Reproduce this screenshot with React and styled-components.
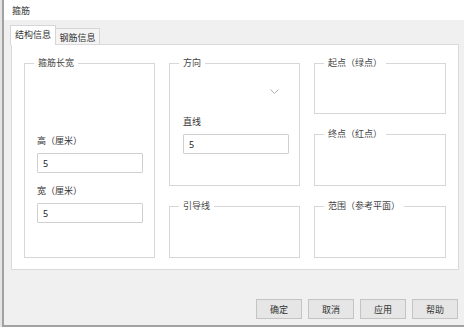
import React from 'react';
import styled, { createGlobalStyle } from 'styled-components';

const Global = createGlobalStyle`
  html, body { margin: 0; padding: 0; }
  body {
    width: 464px; height: 327px; overflow: hidden; background: #f0f0f0;
    font-family: "Noto Sans CJK SC", "Noto Sans", sans-serif;
  }
`;

const Window = styled.div`
  width: 464px; height: 327px; box-sizing: border-box;
  padding-left: 2px; background: #e4e4e4; display: flex;
`;

const Frame = styled.div`
  flex: 1; display: flex; flex-direction: column;
  border-left: 2px solid #a2a2a2; border-bottom: 2px solid #a2a2a2;
  background: #f0f0f0;
`;

const TitleBar = styled.div`
  height: 20px; flex: none; background: #fff; display: flex; align-items: center;
  padding-left: 8px; font-size: 9px; color: #333;
`;

const Body = styled.div`
  flex: 1; display: flex; flex-direction: column;
  padding: 5px 6px 0 7px;
`;

const TabStrip = styled.div`
  display: flex; align-items: flex-end; height: 19px; position: relative; z-index: 1;
`;

const Tab = styled.div`
  box-sizing: border-box; display: flex; align-items: center; justify-content: center;
  font-size: 9px; color: #333;
  border: 1px solid #d6d6d6;
  ${p => p.$active ? `
    height: 20px; width: 46px; margin-left: -1px; margin-bottom: -1px;
    background: #fff; border-bottom: none; padding-bottom: 2px;
  ` : `
    height: 16px; width: 45px; margin-left: -1px;
    background: #f4f4f4; border-bottom: none; padding-top: 1px;
  `}
`;

const Panel = styled.div`
  box-sizing: border-box; width: 448px; height: 226px;
  background: #fff; border: 1px solid #dadada;
  padding: 18px 12px 0 12px;
`;

const Grid = styled.div`
  display: grid;
  grid-template-columns: 131px 131px 132px;
  grid-template-rows: 51px 52px 52px;
  column-gap: 14px; row-gap: 20px;
  grid-template-areas:
    "size dir start"
    "size dir end"
    "size guide range";
`;

const Group = styled.div`
  grid-area: ${p => p.$area};
  position: relative; box-sizing: border-box;
  border: 1px solid #d7d7d7;
  display: flex; flex-direction: column;
`;

const Legend = styled.span`
  position: absolute; top: -7px; left: 9px;
  padding: 0 4px; background: #fff;
  font-size: 9px; line-height: 12px; color: #444;
`;

const SizeContent = styled.div`
  flex: 1; display: flex; flex-direction: column; justify-content: flex-end;
  padding: 0 12px 34px 12px;
  gap: 12px;
`;

const DirContent = styled.div`
  display: flex; flex-direction: column;
  padding: 17px 12px 0 13px;
`;

const Field = styled.div`
  display: flex; flex-direction: column;
`;

const Label = styled.div`
  font-size: 9px; line-height: 12px; color: #333;
  margin-bottom: ${p => p.$gap || 6}px;
  margin-top: ${p => p.$top || 0}px;
`;

const Input = styled.div`
  box-sizing: border-box; width: 106px; height: 20px;
  border: 1px solid #d0d0d0; border-radius: 1px;
  display: flex; align-items: center; padding-left: 5px;
  font-family: "Noto Sans", sans-serif; font-size: 9px; color: #222;
`;

const Select = styled.div`
  width: 106px; height: 20px; display: flex; align-items: center; justify-content: flex-end;
  padding-right: 10px; box-sizing: border-box;
`;

const ButtonRow = styled.div`
  display: flex; justify-content: flex-end; gap: 6px;
  margin-top: 29px; padding-right: 1px;
`;

const Button = styled.div`
  box-sizing: border-box; width: 46px; height: 20px;
  background: #e6e6e6; border: 1px solid #c4c4c4;
  display: flex; align-items: center; justify-content: center;
  font-size: 9px; color: #333;
`;

const Chevron = () => (
  <svg width="9" height="5" viewBox="0 0 9 5">
    <polyline points="0.5,0.5 4.5,4.5 8.5,0.5" fill="none" stroke="#a8a8a8" strokeWidth="0.9" />
  </svg>
);

export default function App() {
  return (
    <>
      <Global />
      <Window>
        <Frame>
          <TitleBar>箍筋</TitleBar>
          <Body>
            <TabStrip>
              <Tab $active>结构信息</Tab>
              <Tab>钢筋信息</Tab>
            </TabStrip>
            <Panel>
              <Grid>
                <Group $area="size">
                  <Legend>箍筋长宽</Legend>
                  <SizeContent>
                    <Field>
                      <Label>高（厘米）</Label>
                      <Input>5</Input>
                    </Field>
                    <Field>
                      <Label>宽（厘米）</Label>
                      <Input>5</Input>
                    </Field>
                  </SizeContent>
                </Group>
                <Group $area="dir">
                  <Legend>方向</Legend>
                  <DirContent>
                    <Select><Chevron /></Select>
                    <Label $top={15}>直线</Label>
                    <Input>5</Input>
                  </DirContent>
                </Group>
                <Group $area="start"><Legend>起点（绿点）</Legend></Group>
                <Group $area="end"><Legend>终点（红点）</Legend></Group>
                <Group $area="guide"><Legend>引导线</Legend></Group>
                <Group $area="range"><Legend>范围（参考平面）</Legend></Group>
              </Grid>
            </Panel>
            <ButtonRow>
              <Button>确定</Button>
              <Button>取消</Button>
              <Button>应用</Button>
              <Button>帮助</Button>
            </ButtonRow>
          </Body>
        </Frame>
      </Window>
    </>
  );
}
